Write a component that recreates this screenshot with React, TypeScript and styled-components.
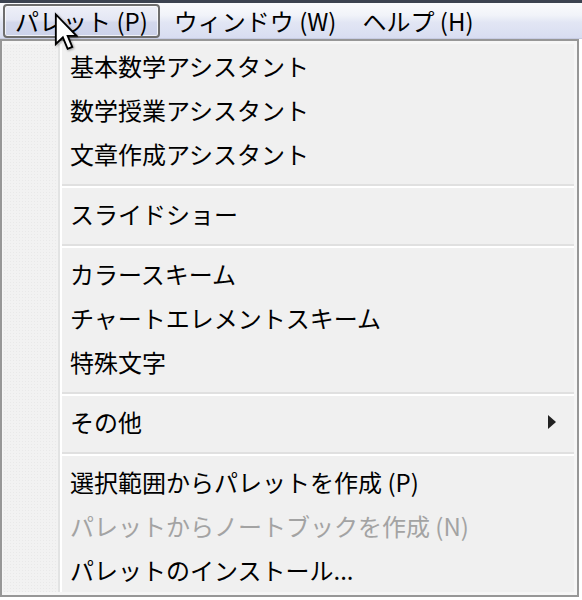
import React from "react";
import styled, { createGlobalStyle } from "styled-components";

const GlobalStyle = createGlobalStyle`
  html, body {
    margin: 0;
    padding: 0;
    background: #ffffff;
  }
  body {
    font-family: "Noto Sans CJK JP", "Noto Sans", sans-serif;
    color: #000;
  }
  * { box-sizing: border-box; }
`;

const Screen = styled.div`
  position: relative;
  width: 582px;
  height: 600px;
  overflow: hidden;
  background: #ffffff;
`;

const TopBand = styled.div`
  height: 3px;
  background: #3c4350;
`;

const MenuBar = styled.div`
  display: flex;
  align-items: stretch;
  gap: 2px;
  height: 36px;
  padding: 1px 0 0 3px;
  background: linear-gradient(
    to bottom,
    #fafbfd 0%,
    #f1f3f9 35%,
    #e2e6f4 55%,
    #d8ddf1 100%
  );
  border-bottom: 1px solid #c7cce3;
`;

const BarItem = styled.div<{ $active?: boolean }>`
  display: flex;
  align-items: center;
  padding: 0 10px 1px;
  font-size: 24px;
  line-height: 1;
  white-space: nowrap;
  color: #000;
  border: 2px solid ${(p) => (p.$active ? "#6e6e6e" : "transparent")};
  border-radius: 4px;
  background: ${(p) =>
    p.$active
      ? "linear-gradient(to bottom, #eef0f8 0%, #e4e7f4 45%, #d3d8ec 55%, #ccd2ea 100%)"
      : "transparent"};
  box-shadow: ${(p) => (p.$active ? "inset 0 0 0 1px rgba(255,255,255,0.7)" : "none")};
`;

const Dropdown = styled.div`
  display: flex;
  width: 579px;
  height: 558px;
  border: 2px solid #979797;
  background: #f6f6f6;
  padding: 3px 3px 3px 1px;
`;

const Gutter = styled.div`
  width: 57px;
  flex: none;
  border-right: 2px solid #e2e3e3;
  background-color: #f2f2f2;
  background-image: radial-gradient(circle, #e9e9e9 0.6px, transparent 0.8px);
  background-size: 3px 3px;
`;

const Content = styled.div`
  flex: 1;
  display: flex;
  flex-direction: column;
  border-left: 2px solid #ffffff;
  background: #f0f0f0;
`;

const Item = styled.div<{ $disabled?: boolean }>`
  display: flex;
  align-items: center;
  justify-content: space-between;
  height: 44px;
  padding: 0 18px 1px 8px;
  font-size: 24px;
  line-height: 1;
  white-space: nowrap;
  color: ${(p) => (p.$disabled ? "#a3a3a3" : "#000")};
`;

const Separator = styled.div`
  height: 16px;
  padding-top: 8px;
  &::before {
    content: "";
    display: block;
    height: 2px;
    background: #e0e0e0;
    border-bottom: 2px solid #ffffff;
    box-sizing: content-box;
  }
`;

const SubArrow = styled.span`
  width: 0;
  height: 0;
  border-top: 7px solid transparent;
  border-bottom: 7px solid transparent;
  border-left: 8px solid #222;
`;

const Cursor = styled.svg`
  position: absolute;
  left: 54px;
  top: 12px;
  width: 24px;
  height: 40px;
  filter: drop-shadow(1px 1px 1px rgba(0, 0, 0, 0.35));
`;

type Entry =
  | { kind: "item"; label: string; disabled?: boolean; sub?: boolean }
  | { kind: "sep" };

const entries: Entry[] = [
  { kind: "item", label: "基本数学アシスタント" },
  { kind: "item", label: "数学授業アシスタント" },
  { kind: "item", label: "文章作成アシスタント" },
  { kind: "sep" },
  { kind: "item", label: "スライドショー" },
  { kind: "sep" },
  { kind: "item", label: "カラースキーム" },
  { kind: "item", label: "チャートエレメントスキーム" },
  { kind: "item", label: "特殊文字" },
  { kind: "sep" },
  { kind: "item", label: "その他", sub: true },
  { kind: "sep" },
  { kind: "item", label: "選択範囲からパレットを作成 (P)" },
  { kind: "item", label: "パレットからノートブックを作成 (N)", disabled: true },
  { kind: "item", label: "パレットのインストール..." },
];

export default function App() {
  return (
    <>
      <GlobalStyle />
      <Screen>
        <TopBand />
        <MenuBar>
          <BarItem $active>パレット (P)</BarItem>
          <BarItem>ウィンドウ (W)</BarItem>
          <BarItem>ヘルプ (H)</BarItem>
        </MenuBar>
        <Dropdown>
          <Gutter />
          <Content>
            {entries.map((e, i) =>
              e.kind === "sep" ? (
                <Separator key={i} />
              ) : (
                <Item key={i} $disabled={e.disabled}>
                  <span>{e.label}</span>
                  {e.sub && <SubArrow />}
                </Item>
              )
            )}
          </Content>
        </Dropdown>
        <Cursor viewBox="0 0 13 21">
          <path
            d="M1 1 L1 17 L4.8 13.4 L7.4 19.6 L9.9 18.6 L7.4 12.6 L12.2 12.6 Z"
            fill="#ffffff"
            stroke="#000000"
            strokeWidth="1"
            strokeLinejoin="miter"
          />
        </Cursor>
      </Screen>
    </>
  );
}
